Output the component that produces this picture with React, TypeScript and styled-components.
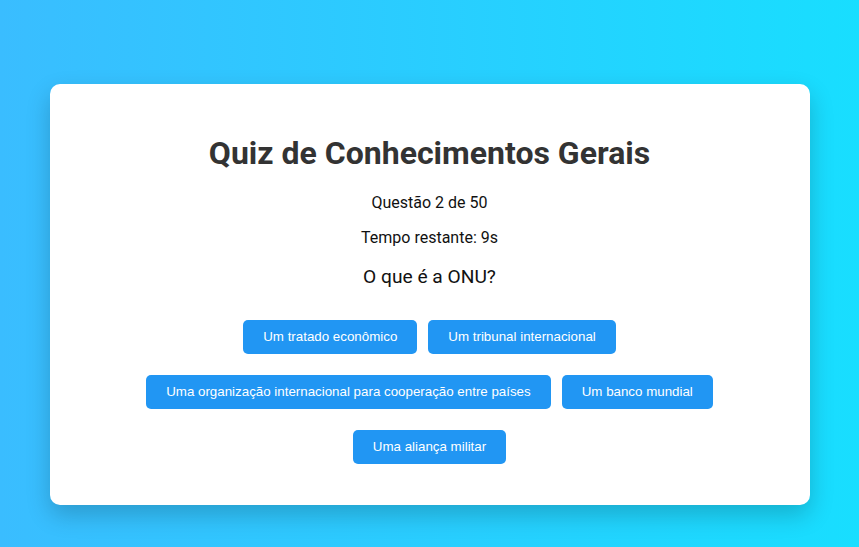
import React from "react";
import styled, { createGlobalStyle } from "styled-components";

const GlobalStyle = createGlobalStyle`
  html, body {
    margin: 0;
    padding: 0;
  }
  body {
    min-height: 547px;
    background: linear-gradient(to right, #3abdff 0%, #18deff 100%);
    font-family: Roboto, "Noto Sans", sans-serif;
  }
`;

const Page = styled.main`
  display: flex;
  justify-content: center;
  padding-top: 84px;
  padding-bottom: 42px;
`;

const Card = styled.section`
  width: 760px;
  box-sizing: border-box;
  background: #ffffff;
  border-radius: 10px;
  box-shadow: 0 10px 25px rgba(0, 0, 0, 0.2);
  padding: 30px 20px;
  text-align: center;
`;

const Title = styled.h1`
  margin: 21px 0;
  font-size: 32px;
  line-height: 37px;
  font-weight: 700;
  color: #333333;
`;

const Meta = styled.p`
  margin: 16px 0;
  font-size: 16px;
  line-height: 19px;
  color: #111111;
`;

const Question = styled.p`
  margin: 19px 0;
  font-size: 19.2px;
  line-height: 22.5px;
  color: #111111;
`;

const Options = styled.div`
  display: flex;
  flex-wrap: wrap;
  justify-content: center;
  column-gap: 11px;
  row-gap: 21px;
  margin: 31px 0 11px;
`;

const OptionButton = styled.button`
  border: none;
  border-radius: 5px;
  background: #2196f3;
  color: #ffffff;
  font-family: "Liberation Sans", Arial, sans-serif;
  font-size: 13.333px;
  line-height: 14px;
  padding: 10px 20px;
  cursor: pointer;
`;

const options = [
  "Um tratado econômico",
  "Um tribunal internacional",
  "Uma organização internacional para cooperação entre países",
  "Um banco mundial",
  "Uma aliança militar",
];

export default function App() {
  return (
    <>
      <GlobalStyle />
      <Page>
        <Card>
          <Title>Quiz de Conhecimentos Gerais</Title>
          <Meta>Questão 2 de 50</Meta>
          <Meta>Tempo restante: 9s</Meta>
          <Question>O que é a ONU?</Question>
          <Options>
            {options.map((o) => (
              <OptionButton key={o}>{o}</OptionButton>
            ))}
          </Options>
        </Card>
      </Page>
    </>
  );
}
